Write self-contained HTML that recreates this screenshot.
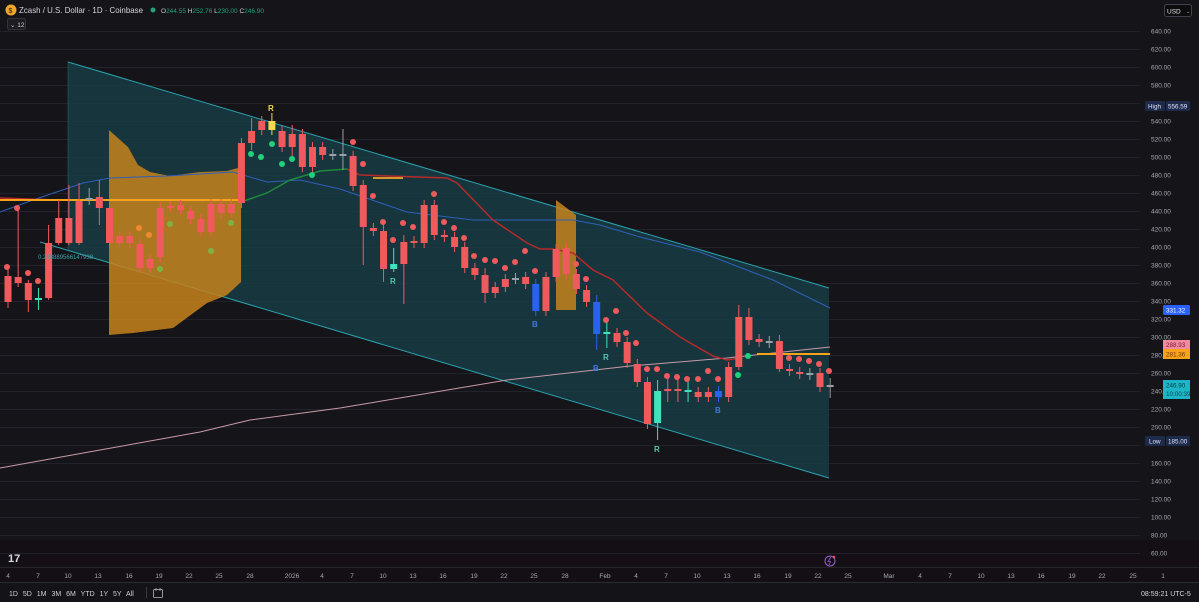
<!DOCTYPE html>
<html><head><meta charset="utf-8"><style>
html,body{margin:0;padding:0;background:#141419;width:1199px;height:602px;overflow:hidden;font-family:"Liberation Sans",sans-serif}
svg{position:absolute;left:0;top:0}
</style></head><body>
<svg id="s" width="1199" height="602" viewBox="0 0 1199 602" xmlns="http://www.w3.org/2000/svg" font-family="Liberation Sans, sans-serif">
<rect width="1199" height="602" fill="#151519"/>
<rect x="0" y="540" width="1199" height="43" fill="#130f15"/>
<g id="grid" stroke="#22222a" stroke-width="1"></g>
<polygon points="68,62 829,288 829,478 68,250" fill="#17404a" fill-opacity="0.75"/>
<line x1="68" y1="62" x2="829" y2="288" stroke="#2aa3b0" stroke-width="1"/>
<line x1="40" y1="242" x2="829" y2="478" stroke="#2aa3b0" stroke-width="1"/>
<line x1="68" y1="62" x2="68" y2="250" stroke="#2a6f78" stroke-width="0.5"/>
<polygon points="109,130 128,147 138,165 150,172 170,176 200,172 227,171 238,168 241,165 241,282 227,295 207,303 173,328 133,333 109,335" fill="#c7831c" fill-opacity="0.85"/>
<polygon points="556,200 576,215 576,310 556,310" fill="#c7831c" fill-opacity="0.85"/>
<polyline points="0,468 100,450 200,432 250,420 340,408 507,380 630,366 727,358 830,347" fill="none" stroke="#c99aa8" stroke-width="1"/>
<polyline points="0,212 33,200 83,183 110,178 167,176 233,172 267,182 300,180 340,189 407,212 473,220 573,220 600,225 640,237 700,252 773,280 830,308" fill="none" stroke="#2f5fb8" stroke-width="1"/>
<polyline points="0,198 57,200" fill="none" stroke="#b52a2a" stroke-width="1.5"/>
<polyline points="241,202 267,193 290,180 320,171 347,169" fill="none" stroke="#1f8a3a" stroke-width="1.5"/>
<polyline points="347,169 360,175 447,178 457,183 493,220 527,243 540,249 553,249 573,253 593,270 613,280 647,313 680,337 713,356 727,360 740,358" fill="none" stroke="#b52a2a" stroke-width="1.5"/>
<line x1="0" y1="200" x2="240" y2="200" stroke="#f7a21b" stroke-width="2"/>
<line x1="373" y1="178" x2="403" y2="178" stroke="#d69a2a" stroke-width="2"/>
<line x1="757" y1="354" x2="830" y2="354" stroke="#f7a21b" stroke-width="2"/>
<g id="c"></g>
<g id="d"></g>
<g font-size="8" font-weight="bold">
<text x="268" y="111" fill="#f0d84a">R</text>
<text x="390" y="284" fill="#4fc9a8">R</text>
<text x="603" y="360" fill="#4fc9a8">R</text>
<text x="654" y="452" fill="#4fc9a8">R</text>
<text x="532" y="327" fill="#3f78e0">B</text>
<text x="593" y="371" fill="#3f78e0">B</text>
<text x="715" y="413" fill="#3f78e0">B</text>
</g>
<text x="38" y="259" font-size="6" fill="#3aa6b0">0.298889566147938</text>
<circle cx="830" cy="561" r="5" fill="none" stroke="#9b5fd0" stroke-width="1"/>
<path d="M831 557 L828 561.5 L830.5 561.5 L829 565" stroke="#9b5fd0" stroke-width="0.8" fill="none"/>
<circle cx="834" cy="557" r="1.3" fill="#e84a6a"/>
<text x="8" y="562" font-size="11" font-weight="bold" fill="#d8d8dc">17</text>
<circle cx="11" cy="10" r="5.5" fill="#f0a62a"/>
<text x="8.5" y="13" font-size="7" font-weight="bold" fill="#5a3a0a">$</text>
<text x="19" y="13" font-size="8.4" fill="#d6d6da" textLength="124" lengthAdjust="spacingAndGlyphs">Zcash / U.S. Dollar · 1D · Coinbase</text>
<circle cx="153" cy="10" r="2.5" fill="#1fa37a"/>
<text x="161" y="13" font-size="6.5" fill="#1fa37a"><tspan fill="#cfcfd3">O</tspan>244.55 <tspan fill="#cfcfd3">H</tspan>252.76 <tspan fill="#cfcfd3">L</tspan>230.00 <tspan fill="#cfcfd3">C</tspan>246.90</text>
<rect x="7.5" y="18.5" width="18" height="11" rx="2" fill="#1c1c22" stroke="#33333b"/>
<text x="10" y="27" font-size="6.5" fill="#cfcfd3">⌄ 12</text>
<rect x="1164.5" y="4.5" width="27" height="12" rx="2" fill="#0d0d10" stroke="#40404a"/>
<text x="1167" y="13.5" font-size="6.5" fill="#e0e0e4">USD</text>
<text x="1186" y="13" font-size="5" fill="#aaa">⌄</text>
<g id="ax" font-size="6.5" fill="#a8a8b0"></g>
<rect x="1145" y="101" width="20" height="10" rx="1.5" fill="#1e2a4a"/>
<text x="1148" y="108.5" font-size="6.3" fill="#dfe6ff">High</text>
<rect x="1166" y="101" width="24" height="10" rx="1.5" fill="#1e2a4a"/>
<text x="1168" y="108.5" font-size="6.3" fill="#dfe6ff">556.59</text>
<rect x="1163" y="305" width="27" height="10" rx="1.5" fill="#2962ff"/>
<text x="1166" y="312.5" font-size="6.3" fill="#fff">331.32</text>
<rect x="1163" y="340" width="27" height="9" fill="#f08aa0"/>
<text x="1166" y="347" font-size="6.3" fill="#7a1a2a">288.93</text>
<rect x="1163" y="349" width="27" height="10" fill="#f7a21b"/>
<text x="1166" y="356.5" font-size="6.3" fill="#6a3a00">281.36</text>
<rect x="1163" y="380" width="27" height="19" fill="#1cb6c8"/>
<text x="1166" y="387.5" font-size="6.3" fill="#053a40">246.90</text>
<text x="1166" y="396" font-size="6.3" fill="#0a4a52">10:00:39</text>
<rect x="1145" y="436" width="20" height="10" rx="1.5" fill="#1e2a4a"/>
<text x="1149" y="443.5" font-size="6.3" fill="#dfe6ff">Low</text>
<rect x="1166" y="436" width="24" height="10" rx="1.5" fill="#1e2a4a"/>
<text x="1168" y="443.5" font-size="6.3" fill="#dfe6ff">185.00</text>
<line x1="0" y1="567.5" x2="1199" y2="567.5" stroke="#26262c"/>
<g id="tx" font-size="6.5" fill="#a8a8b0"></g>
<rect x="0" y="583" width="1199" height="19" fill="#141418"/>
<line x1="0" y1="582.5" x2="1199" y2="582.5" stroke="#2a2a30"/>
<text x="9" y="596" font-size="7" fill="#cfcfd4" word-spacing="3">1D  5D  1M  3M  6M  YTD  1Y  5Y  All</text>
<line x1="146.5" y1="587" x2="146.5" y2="598" stroke="#3a3a40"/>
<rect x="153.5" y="589.5" width="9" height="8" rx="1" fill="none" stroke="#b8b8c0" stroke-width="0.8"/>
<line x1="156" y1="588" x2="156" y2="591" stroke="#b8b8c0" stroke-width="0.8"/>
<line x1="160" y1="588" x2="160" y2="591" stroke="#b8b8c0" stroke-width="0.8"/>
<text x="1141" y="596" font-size="7" fill="#d6d6da">08:59:21 UTC-5</text>
</svg>
<script>
var NS="http://www.w3.org/2000/svg";
function el(p,t,a,txt){var e=document.createElementNS(NS,t);for(var k in a)e.setAttribute(k,a[k]);if(txt!==undefined)e.textContent=txt;document.getElementById(p).appendChild(e);return e;}
for(var k=0;k<=29;k++){var p=640-20*k,y=31+18*k;el('grid','line',{x1:0,y1:y+0.5,x2:1140,y2:y+0.5});
 if(p!=560&&p!=180) el('ax','text',{x:1151,y:y+2.5},p.toFixed(2));}
var tl=[[8,"4"],[38,"7"],[68,"10"],[98,"13"],[129,"16"],[159,"19"],[189,"22"],[219,"25"],[250,"28"],[292,"2026"],[322,"4"],[352,"7"],[383,"10"],[413,"13"],[443,"16"],[474,"19"],[504,"22"],[534,"25"],[565,"28"],[605,"Feb"],[636,"4"],[666,"7"],[697,"10"],[727,"13"],[757,"16"],[788,"19"],[818,"22"],[848,"25"],[889,"Mar"],[920,"4"],[950,"7"],[981,"10"],[1011,"13"],[1041,"16"],[1072,"19"],[1102,"22"],[1133,"25"],[1163,"1"]];
tl.forEach(function(t){el('tx','text',{x:t[0],y:578,"text-anchor":"middle"},t[1]);});
var C=[[276,302,0,270,308],[277,283,0,208,287],[283,300,0,280,312],[298,299,'t',288,310],[243,298,0,225,300],[218,243,0,200,245],[218,243,0,185,245],[201,243,0,183,245],[198,200,'g',188,205],[197,208,0,180,225],[208,243,0],[236,243,0],[236,243,0],[244,268,0],[259,268,0],[208,257,0],[206,207,0],[205,210,0],[211,219,0],[219,232,0],[204,232,0],[204,213,0],[204,213,0],[143,203,0],[131,143,0,118,150],[121,130,0],[121,130,'y',113,135],[131,147,0],[134,147,0,125,158],[134,167,0],[147,167,0],[147,155,0],[154,155,'g'],[154,155,'g',129,170],[156,186,0],[185,227,0,180,265],[228,231,0],[231,269,0,220,282],[264,269,'t',248,272],[242,264,0,235,304],[241,243,0],[205,243,0],[205,235,0],[235,237,0],[237,247,0],[247,268,0],[268,275,0],[275,293,0,268,303],[287,293,0],[279,287,0],[278,279,'g'],[277,284,0],[284,311,'b'],[277,311,0],[249,277,0],[248,274,0],[274,289,0],[290,302,0],[302,334,'b',295,350],[332,334,'t',322,348],[333,342,0],[342,363,0],[364,382,0],[382,424,0],[391,423,'t',380,440],[389,391,0,378,402],[389,391,0,378,402],[390,392,'t',378,402],[392,397,0],[392,397,0],[391,397,'b'],[367,397,0],[317,367,0,305,370],[317,340,0,308,345],[339,342,0],[341,343,'g'],[341,369,0,335,372],[369,371,0],[372,374,0],[373,375,'g'],[373,387,0],[385,387,'g',378,398]];
var col={0:"#f05a5c",t:"#3fe2bb",b:"#2a62f0",y:"#f8d84a",g:"#9aa0a6"};
C.forEach(function(c,i){var x=8+i*10.15,f=col[c[2]];var wt=c[3]||c[0]-5,wb=c[4]||c[1]+5;
 el('c','line',{x1:x,y1:wt,x2:x,y2:wb,stroke:f,"stroke-width":1});
 el('c','rect',{x:x-3.5,y:c[0],width:7,height:Math.max(2,c[1]-c[0]),fill:f});});
var R=[[7,267],[17,208],[28,273],[38,281],[353,142],[363,164],[373,196],[383,222],[393,240],[403,223],[413,227],[434,194],[444,222],[454,228],[464,238],[474,256],[485,260],[495,261],[505,268],[515,262],[525,251],[535,271],[576,264],[586,279],[606,320],[616,311],[626,333],[636,343],[647,369],[657,369],[667,376],[677,377],[687,379],[698,379],[708,371],[718,379],[789,358],[799,359],[809,361],[819,364],[829,371]];
R.forEach(function(p){el('d','circle',{cx:p[0],cy:p[1],r:3,fill:"#f05a5c"});});
[[139,228],[149,235]].forEach(function(p){el('d','circle',{cx:p[0],cy:p[1],r:3,fill:"#f08a30"});});
[[160,269],[170,224],[211,251],[231,223]].forEach(function(p){el('d','circle',{cx:p[0],cy:p[1],r:3,fill:"#7cb342"});});
[[251,154],[261,157],[272,144],[282,164],[292,159],[312,175],[738,375],[748,356]].forEach(function(p){el('d','circle',{cx:p[0],cy:p[1],r:3,fill:"#1fd17a"});});
</script>
</body></html>
